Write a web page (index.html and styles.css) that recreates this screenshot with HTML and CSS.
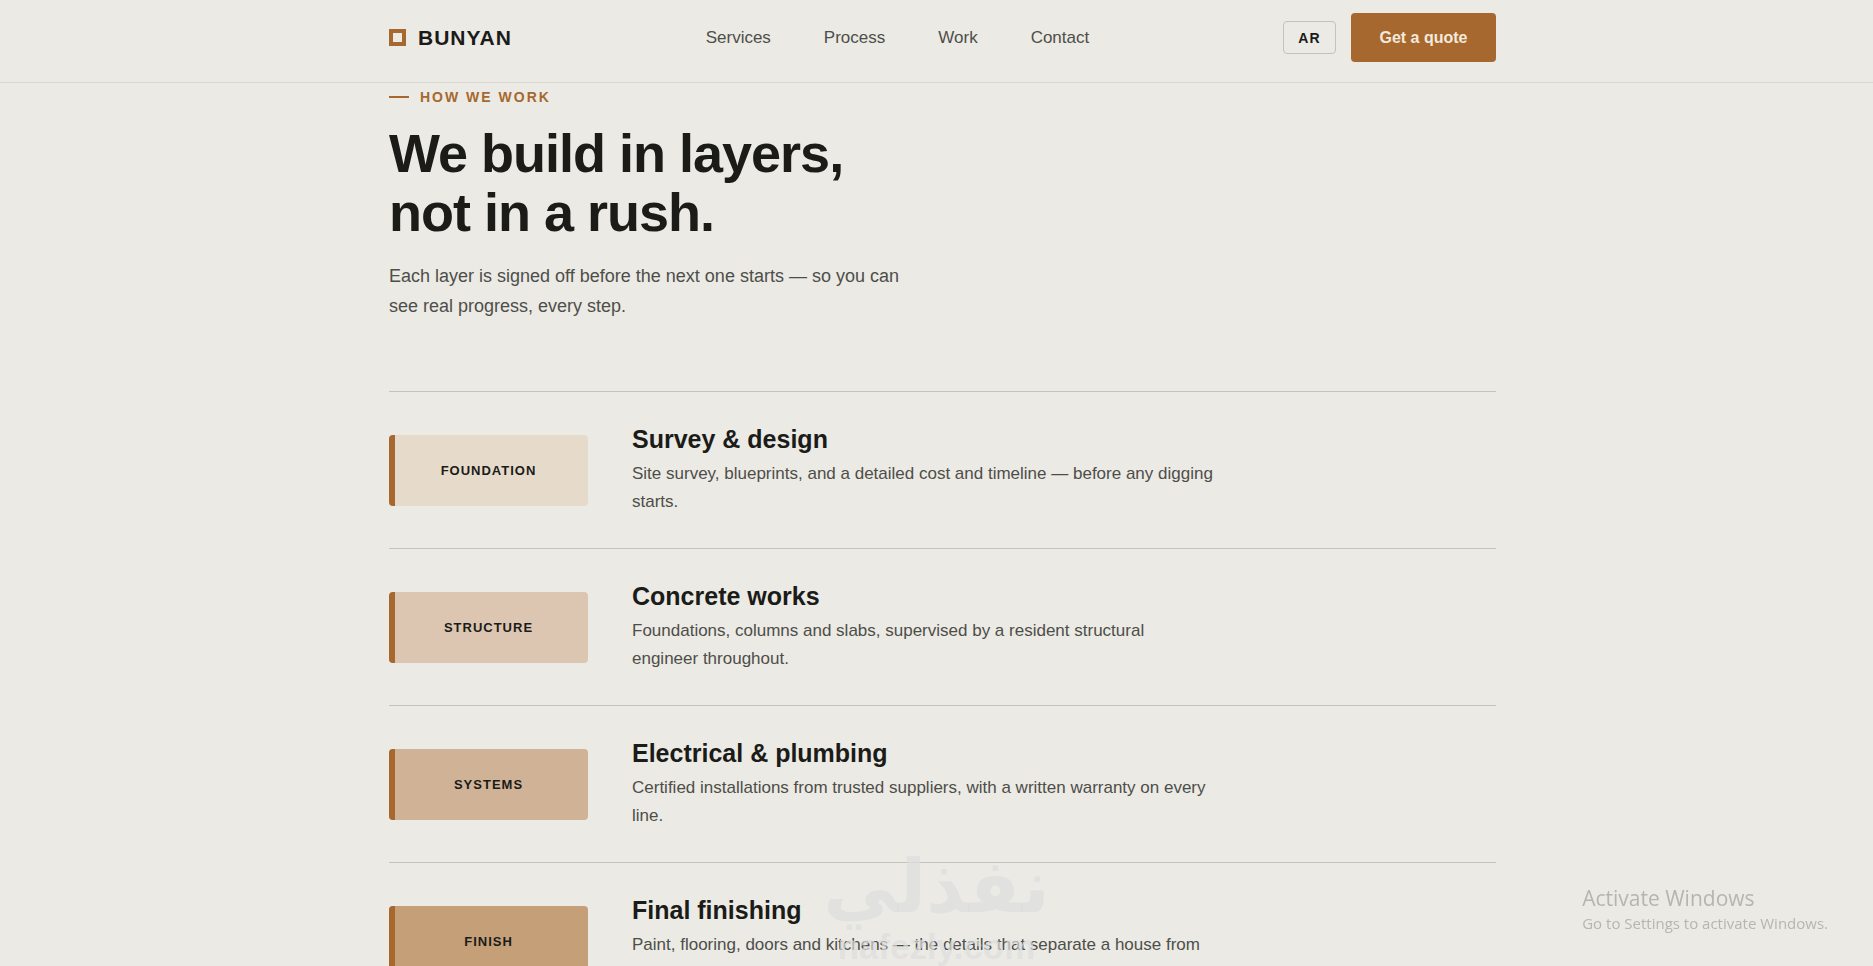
FILE: index.html
```html
<!doctype html>
<html lang="en">
  <head>
    <meta charset="utf-8">
    <title>Bunyan</title>
    <meta name="viewport" content="width=device-width, initial-scale=1">
    <link rel="stylesheet" href="styles.css">
  </head>
  <body>
    <header class="site-header">
      <div class="wrap bar">
        <a class="brand" href="#"><span class="mark"></span>BUNYAN</a>
        <nav class="nav">
          <a href="#services">Services</a>
          <a href="#process">Process</a>
          <a href="#work">Work</a>
          <a href="#contact">Contact</a>
        </nav>
        <div class="actions">
          <button class="lang" type="button">AR</button>
          <a class="btn" href="#contact">Get a quote</a>
        </div>
      </div>
    </header>

    <main class="wrap" id="process">
      <p class="eyebrow">HOW WE WORK</p>
      <h1>We build in layers,<br>not in a rush.</h1>
      <p class="lead">Each layer is signed off before the next one starts — so you can see real progress, every step.</p>

      <ol class="layers">
        <li>
          <span class="chip foundation">FOUNDATION</span>
          <div>
            <h2>Survey &amp; design</h2>
            <p>Site survey, blueprints, and a detailed cost and timeline — before any digging starts.</p>
          </div>
        </li>
        <li>
          <span class="chip structure">STRUCTURE</span>
          <div>
            <h2>Concrete works</h2>
            <p>Foundations, columns and slabs, supervised by a resident structural engineer throughout.</p>
          </div>
        </li>
        <li>
          <span class="chip systems">SYSTEMS</span>
          <div>
            <h2>Electrical &amp; plumbing</h2>
            <p>Certified installations from trusted suppliers, with a written warranty on every line.</p>
          </div>
        </li>
        <li>
          <span class="chip finish">FINISH</span>
          <div>
            <h2>Final finishing</h2>
            <p>Paint, flooring, doors and kitchens — the details that separate a house from a home.</p>
          </div>
        </li>
      </ol>
    </main>

    <div class="watermark">
      <span class="wm-ar" lang="ar" dir="rtl">نفذلي</span>
      <span class="wm-en">nafezly.com</span>
    </div>

    <div class="activate">
      <p class="activate-title">Activate Windows</p>
      <p>Go to Settings to activate Windows.</p>
    </div>
  </body>
</html>
```
FILE: styles.css
```css
* {
  box-sizing: border-box;
  margin: 0;
  padding: 0;
}

body {
  height: 100vh;
  overflow: hidden;
  background: #ebeae5;
  color: #1b1b18;
  font-family: "Liberation Sans", Arial, sans-serif;
}

a {
  color: inherit;
  text-decoration: none;
}

.wrap {
  max-width: 1167px;
  margin: 0 auto;
  padding: 0 24px 0 36px;
}

/* header */
.site-header {
  border-bottom: 1px solid #d9d8d3;
  padding: 13px 0 20px;
}

.bar {
  display: flex;
  align-items: center;
  justify-content: space-between;
}

.brand {
  display: flex;
  align-items: center;
  gap: 12px;
  font-size: 21px;
  font-weight: bold;
  letter-spacing: 1px;
}

.mark {
  width: 17px;
  height: 17px;
  border: 4px solid #a6682e;
}

.nav {
  display: flex;
  gap: 53px;
  font-size: 17px;
  color: #4e4e49;
}

.actions {
  display: flex;
  align-items: center;
  gap: 15px;
}

.lang {
  height: 33px;
  width: 53px;
  border: 1px solid #c3c2bd;
  border-radius: 4px;
  background: none;
  color: #1b1b18;
  font: bold 14px "Liberation Sans", Arial, sans-serif;
  letter-spacing: 1px;
}

.btn {
  width: 145px;
  border-radius: 4px;
  background: #a6682e;
  color: #f3e9dc;
  font-size: 16px;
  font-weight: bold;
  line-height: 49px;
  text-align: center;
}

/* intro */
.eyebrow {
  display: flex;
  align-items: center;
  gap: 11px;
  margin-top: 4px;
  color: #a6682e;
  font-size: 14px;
  font-weight: bold;
  letter-spacing: 2px;
  line-height: 20px;
}

.eyebrow::before {
  content: "";
  width: 20px;
  height: 2px;
  background: #a6682e;
}

h1 {
  margin-top: 17px;
  font-size: 54px;
  letter-spacing: -1px;
  line-height: 59px;
}

.lead {
  max-width: 540px;
  margin-top: 19px;
  color: #4e4e49;
  font-size: 18px;
  line-height: 30px;
}

/* layers */
.layers {
  margin-top: 70px;
  list-style: none;
}

.layers li {
  display: flex;
  align-items: center;
  gap: 44px;
  padding: 32px 0;
  border-top: 1px solid #c3c2bd;
}

.chip {
  flex: none;
  width: 199px;
  border-radius: 4px;
  overflow: hidden;
  position: relative;
  font-size: 13px;
  font-weight: bold;
  letter-spacing: 1px;
  line-height: 71px;
  text-align: center;
}

.chip::before {
  content: "";
  position: absolute;
  top: 0;
  bottom: 0;
  left: 0;
  width: 6px;
  background: #a6682e;
}

.foundation { background: #e6dacb; }
.structure { background: #dcc6b2; }
.systems { background: #d0b296; }
.finish { background: #c59f78; }

h2 {
  font-size: 25px;
  line-height: 30px;
}

.layers p {
  max-width: 582px;
  margin-top: 6px;
  color: #4e4e49;
  font-size: 17px;
  line-height: 28px;
}

/* overlays */
.watermark {
  position: fixed;
  bottom: 0;
  left: 0;
  right: 0;
  display: flex;
  flex-direction: column;
  align-items: center;
  color: rgba(221, 221, 221, 0.7);
  font-weight: bold;
  pointer-events: none;
}

.wm-ar {
  font-family: "DejaVu Sans", sans-serif;
  font-size: 74px;
  line-height: 84px;
}

.wm-en {
  font-size: 35px;
  line-height: 38px;
}

.activate {
  position: fixed;
  right: 45px;
  bottom: 32px;
  color: #b5b6b1;
  font-family: "Open Sans", "Noto Sans", sans-serif;
  font-size: 15px;
  line-height: 22px;
}

.activate-title {
  font-size: 21px;
  line-height: 28px;
}
```
